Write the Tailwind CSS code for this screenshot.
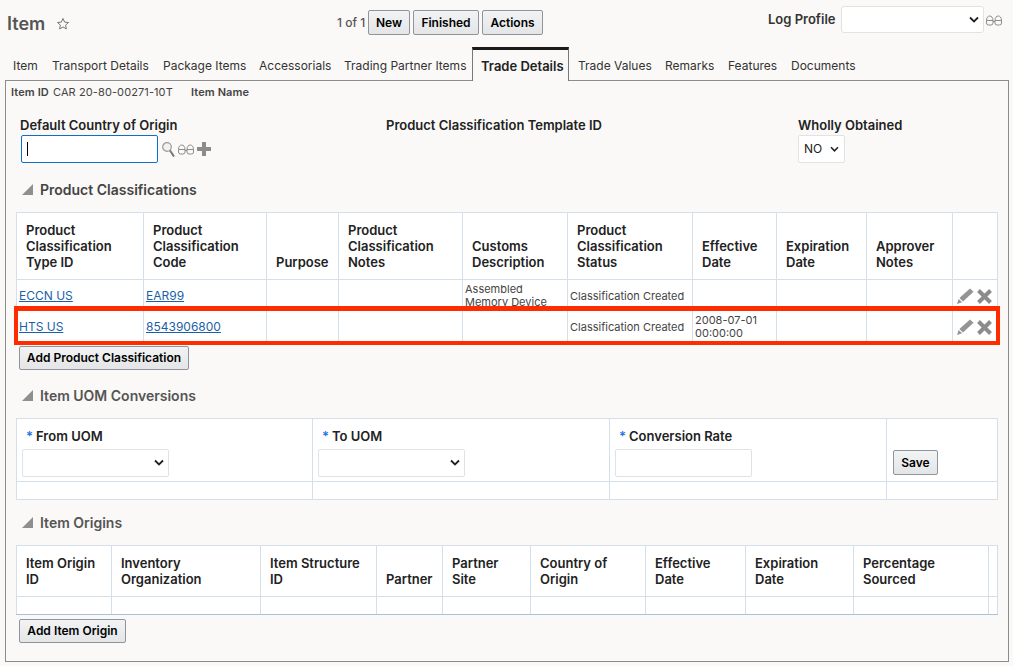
<!DOCTYPE html>
<html lang="en">
<head>
    <meta charset="UTF-8">
    <title>Item</title>
    <script src="https://cdn.jsdelivr.net/npm/@tailwindcss/browser@4"></script>
</head>
<body class="relative h-[666px] w-[1013px] overflow-hidden bg-[#faf9f7] font-['Inter','Liberation_Sans',sans-serif] text-[#222]">

    <!-- Page header -->
    <div class="flex h-[47px] items-start whitespace-nowrap">
        <h1 class="ml-[7px] mt-[12px] w-[38px] text-[18px] leading-[24px] font-semibold text-[#555]">Item</h1>
        <svg class="ml-[11px] mt-[17px] h-[14px] w-[14px] shrink-0" viewBox="0 0 14 14" fill="none" stroke="#777" stroke-width="1"><path d="M7 1.5l1.6 3.6 3.9.4-2.9 2.6.8 3.8L7 10l-3.4 1.9.8-3.8L1.5 5.500l3.900-.4z"/></svg>
        <span class="ml-[267px] mt-[15px] w-[28px] shrink-0 text-[12px] leading-[16px] font-medium text-[#555]">1 of 1</span>
        <div class="ml-[3px] mt-[10px] flex shrink-0 gap-[3px]">
            <button class="h-[25px] w-[42px] rounded-[2px] border border-[#8f959a] bg-gradient-to-b from-[#f2f3f4] to-[#e3e5e7] text-[12px] font-semibold text-black">New</button>
            <button class="h-[25px] w-[66px] rounded-[2px] border border-[#8f959a] bg-gradient-to-b from-[#f2f3f4] to-[#e3e5e7] text-[12px] font-semibold text-black">Finished</button>
            <button class="h-[25px] w-[61px] rounded-[2px] border border-[#8f959a] bg-gradient-to-b from-[#f2f3f4] to-[#e3e5e7] text-[12px] font-semibold text-black">Actions</button>
        </div>
        <span class="ml-[225px] mt-[11px] w-[68px] shrink-0 text-[13px] leading-[16px] font-semibold text-[#333]">Log Profile</span>
        <div class="relative ml-[5px] mt-[6px] h-[27px] w-[143px] shrink-0">
            <select class="h-full w-full appearance-none rounded-[3px] border border-[#e2e2e2] bg-white"></select>
            <svg class="absolute right-[5px] top-[10px] h-[8px] w-[10px]" viewBox="0 0 10 8" fill="none" stroke="#222" stroke-width="1.800"><path d="M1 1.500l4 4 4-4"/></svg>
        </div>
        <svg class="ml-[2px] mt-[15px] h-[11px] w-[16px] shrink-0" viewBox="0 0 16 11" fill="none" stroke="#8c8c8c" stroke-width="1"><path d="M.5 5.500h6.500v2.500a2 2 0 0 1-2 2h-2.500a2 2 0 0 1-2-2zM9 5.500h6.500v2.500a2 2 0 0 1-2 2h-2.500a2 2 0 0 1-2-2zM7 6.500h2M.5 5.500c0-3 1.500-4.500 3.250-4.500s3.250 1.500 3.250 4.500M9 5.500c0-3 1.500-4.500 3.250-4.500s3.250 1.500 3.250 4.500"/></svg>
    </div>

    <!-- Tabs -->
    <div class="relative z-10 ml-[6px] flex h-[34px] whitespace-nowrap text-[12px] leading-[16px] text-[#333]">
        <a class="w-[39px] pl-[7px] pt-[11px]">Item</a>
        <a class="w-[111px] pl-[7px] pt-[11px]">Transport Details</a>
        <a class="w-[96px] pl-[7px] pt-[11px]">Package Items</a>
        <a class="w-[85px] pl-[7px] pt-[11px]">Accessorials</a>
        <a class="w-[135px] pl-[7px] pt-[11px]">Trading Partner Items</a>
        <a class="w-[97px] border-x border-t-[3px] border-x-[#777] border-t-[#1a1a1a] bg-[#faf9f7] pl-[8px] pt-[8px] text-[13px] font-semibold text-[#222]">Trade Details</a>
        <a class="w-[89px] pl-[9px] pt-[11px]">Trade Values</a>
        <a class="w-[63px] pl-[7px] pt-[11px]">Remarks</a>
        <a class="w-[63px] pl-[7px] pt-[11px]">Features</a>
        <a class="pl-[7px] pt-[11px]">Documents</a>
    </div>

    <!-- Tab panel -->
    <div class="-mt-[1px] ml-[5px] h-[582px] w-[1004px] border border-[#8c8c8c] px-[10px]">
        <div class="-ml-[5px] flex pt-[4px] text-[11px] leading-[14px] tracking-[0.1px] text-[#444]">
            <span class="w-[39px] font-semibold">Item ID</span>
            <span class="ml-[3px] w-[138px]">CAR 20-80-00271-10T</span>
            <span class="font-semibold">Item Name</span>
        </div>

        <div class="mt-[18px] flex text-[13px] leading-[16px] font-semibold">
            <div class="ml-[4px] w-[366px]">
                <div>Default Country of Origin</div>
                <div class="mt-[2px] flex items-center">
                    <div class="ml-[1px] flex h-[28px] w-[137px] items-center rounded-[2px] border border-[#0f6fc6] bg-white pl-[5px]">
                        <span class="h-[14px] w-[1px] bg-black"></span>
                    </div>
                    <svg class="ml-[4px] h-[15px] w-[13px]" viewBox="0 0 13 15" fill="none"><circle cx="5" cy="5" r="4.300" stroke="#9a9a9a" stroke-width="1.200" fill="#f2f2f2"/><path d="M8 8.500l4 6" stroke="#777" stroke-width="2"/></svg>
                    <svg class="ml-[3px] h-[11px] w-[16px]" viewBox="0 0 16 11" fill="none" stroke="#8c8c8c" stroke-width="1"><path d="M.5 5.500h6.500v2.500a2 2 0 0 1-2 2h-2.500a2 2 0 0 1-2-2zM9 5.500h6.500v2.500a2 2 0 0 1-2 2h-2.500a2 2 0 0 1-2-2zM7 6.500h2M.5 5.500c0-3 1.500-4.500 3.250-4.500s3.250 1.500 3.250 4.500M9 5.500c0-3 1.500-4.500 3.250-4.500s3.250 1.500 3.250 4.500"/></svg>
                    <svg class="ml-[3px] h-[14px] w-[14px]" viewBox="0 0 14 14" fill="#8c8c8c"><path d="M5 0h4v5h5v4h-5v5h-4v-5h-5v-4h5z"/></svg>
                </div>
            </div>
            <div class="w-[412px]">Product Classification Template ID</div>
            <div>
                <div>Wholly Obtained</div>
                <div class="relative mt-[2px] h-[28px] w-[47px]">
                    <select class="h-full w-full appearance-none rounded-[2px] border border-[#e2e2e2] bg-white pl-[5px] text-[12px] font-normal text-[#222]"><option>NO</option></select>
                    <svg class="absolute right-[6px] top-[11px] h-[7px] w-[9px]" viewBox="0 0 10 8" fill="none" stroke="#222" stroke-width="1.800"><path d="M1 1.500l4 4 4-4"/></svg>
                </div>
            </div>
        </div>

        <!-- Product Classifications -->
        <div class="mt-[16px] flex h-[20px] items-center">
            <svg class="ml-[6px] h-[11px] w-[11px]" viewBox="0 0 11 11" fill="#8f8f8f"><path d="M11 0v11H0z"/></svg>
            <h2 class="ml-[7px] text-[14px] font-semibold text-[#444]">Product Classifications</h2>
        </div>
        <table class="mt-[13px] w-[981px] table-fixed border-collapse bg-white [&_td]:border [&_td]:border-[#d5dfe9] [&_th]:border [&_th]:border-[#d5dfe9] [&_th]:pb-[9px] [&_th]:pl-[9px] [&_th]:text-left [&_th]:align-bottom [&_th]:text-[13px] [&_th]:leading-[16px] [&_th]:font-semibold">
            <colgroup>
                <col class="w-[127px]"><col class="w-[123px]"><col class="w-[72px]"><col class="w-[124px]"><col class="w-[105px]"><col class="w-[125px]"><col class="w-[84px]"><col class="w-[90px]"><col class="w-[86px]"><col class="w-[45px]">
            </colgroup>
            <tr class="h-[67px]">
                <th>Product Classification Type ID</th>
                <th>Product Classification Code</th>
                <th>Purpose</th>
                <th>Product Classification Notes</th>
                <th>Customs Description</th>
                <th>Product Classification Status</th>
                <th>Effective Date</th>
                <th>Expiration Date</th>
                <th>Approver Notes</th>
                <th></th>
            </tr>
            <tr class="h-[31px] text-[11px] leading-[13px] text-[#444] [&_td]:pt-[2px]">
                <td class="pl-[2px]"><a class="text-[12px] text-[#1c5fa8] underline">ECCN US</a></td>
                <td class="pl-[2px]"><a class="text-[12px] text-[#1c5fa8] underline">EAR99</a></td>
                <td></td>
                <td></td>
                <td class="pl-[2px]">Assembled Memory Device</td>
                <td class="pl-[2px]">Classification Created</td>
                <td></td>
                <td></td>
                <td></td>
                <td>
                    <div class="flex items-center pl-[4px]">
                        <svg class="h-[16px] w-[17px]" viewBox="0 0 17 16" fill="#949494"><path d="M13 .5l3.500 3.300-10.500 9.700-3.600-3.400zM1.600 11l3.500 3.300-5.100 1.700z"/></svg>
                        <svg class="ml-[3px] h-[15px] w-[15px]" viewBox="0 0 15 15" fill="none" stroke="#8c8c8c" stroke-width="4"><path d="M1.500 1.500l12 12M13.500 1.500l-12 12"/></svg>
                    </div>
                </td>
            </tr>
            <tr class="h-[31px] text-[11px] leading-[13px] text-[#444] [&_td]:pt-[2px]">
                <td class="pl-[2px]"><a class="text-[12px] text-[#1c5fa8] underline">HTS US</a></td>
                <td class="pl-[2px]"><a class="text-[12px] text-[#1c5fa8] underline">8543906800</a></td>
                <td></td>
                <td></td>
                <td></td>
                <td class="pl-[2px]">Classification Created</td>
                <td class="pl-[2px]">2008-07-01 00:00:00</td>
                <td></td>
                <td></td>
                <td>
                    <div class="flex items-center pl-[4px]">
                        <svg class="h-[16px] w-[17px]" viewBox="0 0 17 16" fill="#949494"><path d="M13 .5l3.500 3.300-10.500 9.700-3.600-3.400zM1.600 11l3.500 3.300-5.100 1.700z"/></svg>
                        <svg class="ml-[3px] h-[15px] w-[15px]" viewBox="0 0 15 15" fill="none" stroke="#8c8c8c" stroke-width="4"><path d="M1.500 1.500l12 12M13.500 1.500l-12 12"/></svg>
                    </div>
                </td>
            </tr>
        </table>
        <button class="ml-[3px] mt-[4px] block h-[24px] w-[170px] rounded-[2px] border border-[#8f959a] bg-gradient-to-b from-[#f2f3f4] to-[#e3e5e7] text-[12px] font-semibold text-black">Add Product Classification</button>

        <!-- Item UOM Conversions -->
        <div class="mt-[15px] flex h-[20px] items-center">
            <svg class="ml-[6px] h-[11px] w-[11px]" viewBox="0 0 11 11" fill="#8f8f8f"><path d="M11 0v11H0z"/></svg>
            <h2 class="ml-[7px] text-[14px] font-semibold text-[#555]">Item UOM Conversions</h2>
        </div>
        <table class="mt-[13px] w-[981px] table-fixed border-collapse bg-white [&_td]:border [&_td]:border-[#d5dfe9] [&_td]:align-top">
            <colgroup>
                <col class="w-[296px]"><col class="w-[297px]"><col class="w-[277px]"><col class="w-[111px]">
            </colgroup>
            <tr class="h-[63px] text-[13px] leading-[16px] font-semibold">
                <td class="pl-[5px] pt-[9px]">
                    <div class="pl-[4px]"><span class="mr-[3px] text-[#1a73e8]">*</span>From UOM</div>
                    <div class="relative mt-[5px] h-[28px] w-[147px]">
                        <select class="h-full w-full appearance-none rounded-[2px] border border-[#e2e2e2] bg-white"></select>
                        <svg class="absolute right-[5px] top-[10px] h-[8px] w-[10px]" viewBox="0 0 10 8" fill="none" stroke="#222" stroke-width="1.800"><path d="M1 1.500l4 4 4-4"/></svg>
                    </div>
                </td>
                <td class="pl-[5px] pt-[9px]">
                    <div class="pl-[4px]"><span class="mr-[3px] text-[#1a73e8]">*</span>To UOM</div>
                    <div class="relative mt-[5px] h-[28px] w-[147px]">
                        <select class="h-full w-full appearance-none rounded-[2px] border border-[#e2e2e2] bg-white"></select>
                        <svg class="absolute right-[5px] top-[10px] h-[8px] w-[10px]" viewBox="0 0 10 8" fill="none" stroke="#222" stroke-width="1.800"><path d="M1 1.500l4 4 4-4"/></svg>
                    </div>
                </td>
                <td class="pl-[5px] pt-[9px]">
                    <div class="pl-[4px]"><span class="mr-[3px] text-[#1a73e8]">*</span>Conversion Rate</div>
                    <input class="mt-[5px] block h-[28px] w-[137px] rounded-[2px] border border-[#e2e2e2] bg-white">
                </td>
                <td class="pl-[6px] pt-[31px]">
                    <button class="h-[25px] w-[45px] rounded-[2px] border border-[#8f959a] bg-gradient-to-b from-[#f2f3f4] to-[#e3e5e7] text-[12px] font-semibold text-black">Save</button>
                </td>
            </tr>
            <tr class="h-[18px]"><td></td><td></td><td></td><td></td></tr>
        </table>

        <!-- Item Origins -->
        <div class="mt-[12px] flex h-[20px] items-center">
            <svg class="ml-[6px] h-[11px] w-[11px]" viewBox="0 0 11 11" fill="#8f8f8f"><path d="M11 0v11H0z"/></svg>
            <h2 class="ml-[7px] text-[14px] font-semibold text-[#555]">Item Origins</h2>
        </div>
        <table class="mt-[13px] w-[981px] table-fixed border-collapse bg-white [&_td]:border-x [&_td]:border-b [&_td]:border-x-[#d5dfe9] [&_td]:border-b-[#a9c0df] [&_th]:border [&_th]:border-[#d5dfe9] [&_th]:pb-[9px] [&_th]:pl-[9px] [&_th]:text-left [&_th]:align-bottom [&_th]:text-[13px] [&_th]:leading-[16px] [&_th]:font-semibold">
            <colgroup>
                <col class="w-[95px]"><col class="w-[149px]"><col class="w-[116px]"><col class="w-[66px]"><col class="w-[88px]"><col class="w-[115px]"><col class="w-[100px]"><col class="w-[108px]"><col class="w-[135px]"><col class="w-[9px]">
            </colgroup>
            <tr class="h-[51px]">
                <th>Item Origin ID</th>
                <th>Inventory Organization</th>
                <th>Item Structure ID</th>
                <th>Partner</th>
                <th>Partner<br>Site</th>
                <th>Country of Origin</th>
                <th>Effective<br>Date</th>
                <th>Expiration<br>Date</th>
                <th>Percentage Sourced</th>
                <th></th>
            </tr>
            <tr class="h-[18px]"><td></td><td></td><td></td><td></td><td></td><td></td><td></td><td></td><td></td><td></td></tr>
        </table>
        <button class="ml-[3px] mt-[4px] block h-[24px] w-[107px] rounded-[2px] border border-[#8f959a] bg-gradient-to-b from-[#f2f3f4] to-[#e3e5e7] text-[12px] font-semibold text-black">Add Item Origin</button>
    </div>

    <!-- Red highlight drawn over the HTS row -->
    <div class="absolute left-[14px] top-[306px] h-[39px] w-[986px] border-[4px] border-t-[5px] border-[#ff2c00]"></div>
</body>
</html>
